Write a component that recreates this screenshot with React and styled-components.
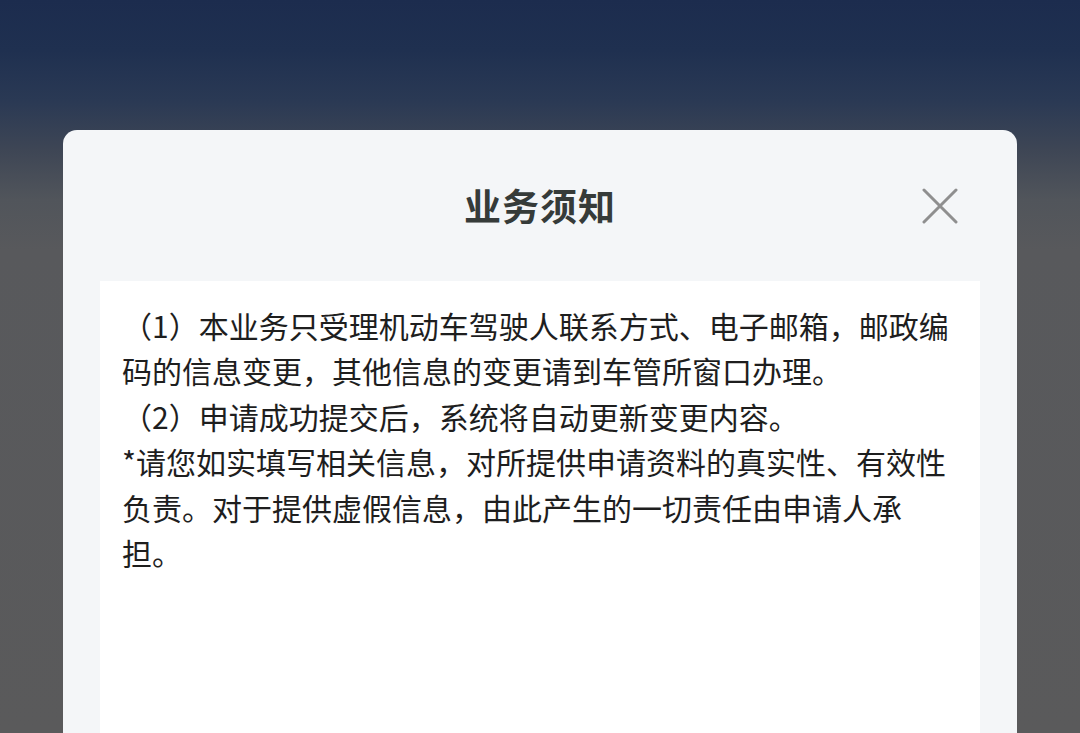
import React from "react";
import styled, { createGlobalStyle } from "styled-components";

const Global = createGlobalStyle`
  html, body { margin: 0; padding: 0; }
  body {
    width: 1080px;
    height: 733px;
    overflow: hidden;
    font-family: "Noto Sans CJK SC", "Noto Sans", sans-serif;
  }
`;

const Backdrop = styled.div`
  width: 1080px;
  height: 733px;
  box-sizing: border-box;
  padding: 130px 63px 0;
  background: linear-gradient(
    180deg,
    #1c2c4e 0px,
    #1f3050 50px,
    #2a3954 100px,
    #3e4655 150px,
    #51555b 200px,
    #58595c 250px,
    #5a5a5b 733px
  );
  overflow: hidden;
`;

const Modal = styled.div`
  background: #f4f6f8;
  border-radius: 14px 14px 0 0;
  height: 700px;
  padding: 0 37px;
  display: flex;
  flex-direction: column;
`;

const Header = styled.div`
  position: relative;
  height: 151px;
  display: flex;
  align-items: center;
  justify-content: center;
`;

const Title = styled.h1`
  margin: 0;
  font-size: 37px;
  font-weight: 700;
  color: #363b39;
  letter-spacing: 1px;
  line-height: 1;
`;

const Close = styled.button`
  position: absolute;
  right: 22px;
  top: 58px;
  width: 36px;
  height: 36px;
  padding: 0;
  border: none;
  background: transparent;
  display: flex;
  align-items: center;
  justify-content: center;
`;

const Content = styled.div`
  flex: 1;
  background: #ffffff;
  padding: 22px 22px;
`;

const Text = styled.div`
  width: 834px;
  font-size: 30px;
  line-height: 45.4px;
  color: #1e1e1e;
  line-break: strict;
`;

export default function App() {
  return (
    <>
      <Global />
      <Backdrop>
        <Modal>
          <Header>
            <Title>业务须知</Title>
            <Close aria-label="关闭">
              <svg width="36" height="36" viewBox="0 0 36 36">
                <path d="M2 2 L34 34 M34 2 L2 34" stroke="#8f8f8f" strokeWidth="3" strokeLinecap="round" />
              </svg>
            </Close>
          </Header>
          <Content>
            <Text>
              （1）本业务只受理机动车驾驶人联系方式、电子邮箱，邮政编码的信息变更，其他信息的变更请到车管所窗口办理。
              <br />
              （2）申请成功提交后，系统将自动更新变更内容。
              <br />
              *请您如实填写相关信息，对所提供申请资料的真实性、有效性负责。对于提供虚假信息，由此产生的一切责任由申请人承担。
            </Text>
          </Content>
        </Modal>
      </Backdrop>
    </>
  );
}
